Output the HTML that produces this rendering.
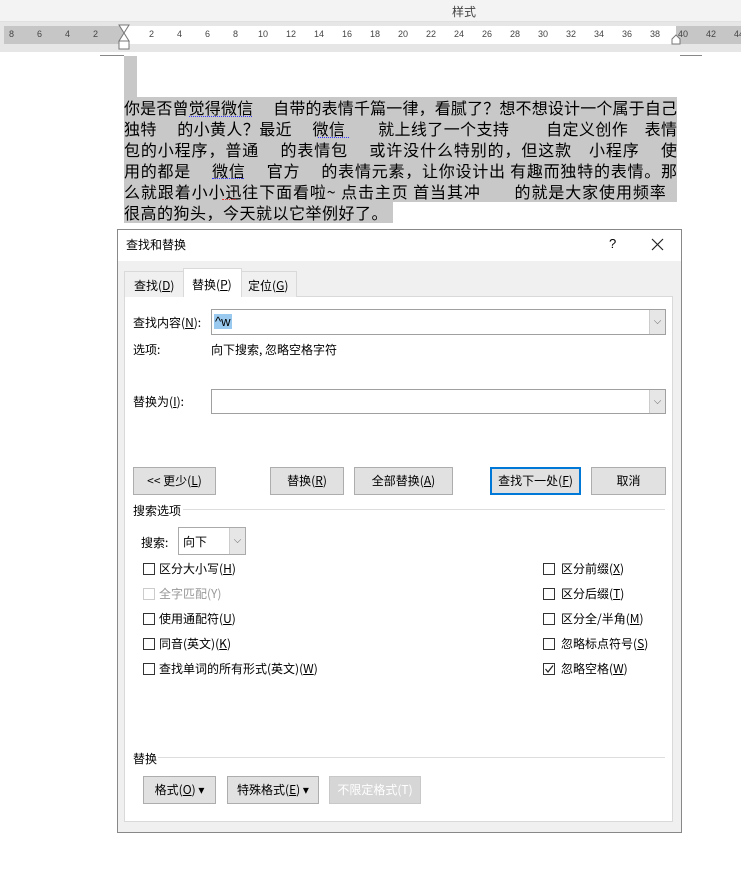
<!DOCTYPE html>
<html><head><meta charset="utf-8"><style>
*{margin:0;padding:0;box-sizing:border-box}
body{width:741px;height:877px;overflow:hidden;background:#fff;font-family:"Liberation Sans","Noto Sans CJK SC",sans-serif;font-size:12px;color:#000;position:relative}
.a{position:absolute}
.t{font-family:"Noto Sans CJK SC","WenQuanYi Zen Hei",sans-serif}
.btn{position:absolute;background:#e1e1e1;border:1px solid #adadad;text-align:center;font-size:12px;line-height:26px}
.cb{position:absolute;width:12px;height:12px;border:1px solid #333;background:#fff}
.lb{position:absolute;font-size:12px;line-height:14px}
.inp{position:absolute;background:#fff;border:1px solid #a0a0a0}
.dd{position:absolute;right:0;top:0;bottom:0;width:16px;background:#e6e6e6;border-left:1px solid #ccc;color:#666;font-size:10px;text-align:center}
.ln{background:#c8c8c8;height:21px;white-space:nowrap;text-align:justify;text-align-last:justify;overflow:hidden}
</style></head><body>
<div class="a" style="left:0;top:0;width:741px;height:22px;background:#f3f3f3;border-bottom:1px solid #e0e0e0"></div>
<div class="a t" style="left:452px;top:3px;font-size:12px;color:#444">样式</div>
<div class="a" style="left:0;top:22px;width:741px;height:30px;background:#e6e6e6"></div>
<div class="a" style="left:4px;top:26px;width:120px;height:18px;background:#c6c6c6"></div>
<div class="a" style="left:124px;top:26px;width:552px;height:18px;background:#fff"></div>
<div class="a" style="left:676px;top:26px;width:65px;height:18px;background:#c6c6c6"></div>
<div class="a" style="left:0;top:29px;width:741px;height:14px;font-size:9px;color:#444">
<span class="a" style="left:9px">8</span><span class="a" style="left:37px">6</span><span class="a" style="left:65px">4</span><span class="a" style="left:93px">2</span>
<span class="a" style="left:149px">2</span><span class="a" style="left:177px">4</span><span class="a" style="left:205px">6</span><span class="a" style="left:233px">8</span><span class="a" style="left:258px">10</span><span class="a" style="left:286px">12</span><span class="a" style="left:314px">14</span><span class="a" style="left:342px">16</span><span class="a" style="left:370px">18</span><span class="a" style="left:398px">20</span><span class="a" style="left:426px">22</span><span class="a" style="left:454px">24</span><span class="a" style="left:482px">26</span><span class="a" style="left:510px">28</span><span class="a" style="left:538px">30</span><span class="a" style="left:566px">32</span><span class="a" style="left:594px">34</span><span class="a" style="left:622px">36</span><span class="a" style="left:650px">38</span><span class="a" style="left:678px">40</span><span class="a" style="left:706px">42</span><span class="a" style="left:734px">44</span></div>
<svg class="a" style="left:117px;top:24px" width="16" height="32"><path d="M2 1H12L7 9Z M7 9L2 17H12Z" fill="#fff" stroke="#777"/><rect x="2" y="17" width="10" height="8" fill="#fff" stroke="#777"/></svg>
<svg class="a" style="left:671px;top:34px" width="12" height="12"><path d="M1 10V5L5 1L9 5V10Z" fill="#fff" stroke="#777"/></svg>
<div class="a" style="left:5px;top:52px;width:736px;height:825px;background:#fff"></div>
<div class="a" style="left:100px;top:55px;width:24px;height:1px;background:#888"></div>
<div class="a" style="left:680px;top:55px;width:22px;height:1px;background:#888"></div>
<div class="a" style="left:124px;top:56px;width:13px;height:42px;background:#c8c8c8"></div>
<div class="a t" style="left:124px;top:97px;width:560px;font-size:16px;line-height:20.6px">
<div class="ln" style="width:553px">你是否曾觉得微信　 自带的表情千篇一律，看腻了？想不想设计一个属于自己</div>
<div class="ln" style="width:553px">独特　 的小黄人？最近　 微信　　就上线了一个支持　　 自定义创作　表情</div>
<div class="ln" style="width:553px">包的小程序，普通　 的表情包　 或许没什么特别的，但这款　小程序　 使</div>
<div class="ln" style="width:553px">用的都是　 微信　 官方　 的表情元素，让你设计出 有趣而独特的表情。那</div>
<div class="ln" style="width:553px;text-align-last:auto;letter-spacing:0.9px">么就跟着小小迅往下面看啦~ 点击主页 首当其冲　　的就是大家使用频率　</div>
<div class="ln" style="width:269px;text-align-last:auto;letter-spacing:0.5px">很高的狗头，今天就以它举例好了。</div>
</div>
<div class="a" style="left:189px;top:116px;width:63px;border-bottom:1px dotted #33f"></div>
<div class="a" style="left:318px;top:137px;width:31px;border-bottom:1px dotted #33f"></div>
<div class="a" style="left:212px;top:178px;width:32px;border-bottom:1px dotted #33f"></div>
<div class="a" style="left:222px;top:199px;width:14px;border-bottom:1px dotted #e33"></div>
<div class="a" style="left:117px;top:229px;width:565px;height:604px;background:#f0f0f0;border:1px solid #888"></div>
<div class="a" style="left:118px;top:230px;width:563px;height:31px;background:#fff"></div>
<div class="a t" style="left:126px;top:236px;font-size:12px">查找和替换</div>
<div class="a" style="left:609px;top:236px;font-size:13px">?</div>
<svg class="a" style="left:651px;top:238px" width="13" height="13"><path d="M1 1L12 12M12 1L1 12" stroke="#222" stroke-width="1.2"/></svg>
<div class="a" style="left:124px;top:296px;width:549px;height:526px;background:#fff;border:1px solid #d9d9d9"></div>
<div class="a" style="left:124px;top:271px;width:60px;height:26px;background:#f0f0f0;border:1px solid #d9d9d9;border-bottom:none"></div>
<div class="a" style="left:183px;top:268px;width:59px;height:29px;background:#fff;border:1px solid #d9d9d9;border-bottom:none"></div>
<div class="a" style="left:241px;top:271px;width:56px;height:26px;background:#f0f0f0;border:1px solid #d9d9d9;border-bottom:none"></div>
<div class="a t" style="left:134px;top:277px">查找(<u>D</u>)</div>
<div class="a t" style="left:192px;top:276px">替换(<u>P</u>)</div>
<div class="a t" style="left:248px;top:277px">定位(<u>G</u>)</div>
<div class="a t" style="left:133px;top:314px">查找内容(<u>N</u>):</div>
<div class="inp" style="left:211px;top:309px;width:455px;height:26px"><span class="a" style="left:2px;top:4px;background:#99c9ef;padding:0 1px;font-size:13px">^w</span><div class="dd" style="line-height:24px">⌵</div></div>
<div class="a t" style="left:133px;top:341px">选项:</div>
<div class="a t" style="left:211px;top:341px">向下搜索, 忽略空格字符</div>
<div class="a t" style="left:133px;top:393px">替换为(<u>I</u>):</div>
<div class="inp" style="left:211px;top:389px;width:455px;height:25px"><div class="dd" style="line-height:23px">⌵</div></div>
<div class="btn t" style="left:133px;top:467px;width:83px;height:28px">&lt;&lt; 更少(<u>L</u>)</div>
<div class="btn t" style="left:270px;top:467px;width:74px;height:28px">替换(<u>R</u>)</div>
<div class="btn t" style="left:354px;top:467px;width:99px;height:28px">全部替换(<u>A</u>)</div>
<div class="btn t" style="left:490px;top:467px;width:91px;height:28px;border:2px solid #0078d7;line-height:24px">查找下一处(<u>F</u>)</div>
<div class="btn t" style="left:591px;top:467px;width:75px;height:28px">取消</div>
<div class="a t" style="left:133px;top:502px">搜索选项</div>
<div class="a" style="left:183px;top:509px;width:482px;height:1px;background:#ddd"></div>
<div class="a t" style="left:141px;top:534px">搜索:</div>
<div class="inp" style="left:178px;top:527px;width:68px;height:28px;border-color:#aaa"><span class="a t" style="left:4px;top:5px">向下</span><div class="dd" style="line-height:26px">⌵</div></div>
<div class="cb" style="left:143px;top:563px"></div><div class="lb t" style="left:159px;top:562px">区分大小写(<u>H</u>)</div>
<div class="cb" style="left:143px;top:588px;border-color:#ccc"></div><div class="lb t" style="left:159px;top:587px;color:#999">全字匹配(Y)</div>
<div class="cb" style="left:143px;top:613px"></div><div class="lb t" style="left:159px;top:612px">使用通配符(<u>U</u>)</div>
<div class="cb" style="left:143px;top:638px"></div><div class="lb t" style="left:159px;top:637px">同音(英文)(<u>K</u>)</div>
<div class="cb" style="left:143px;top:663px"></div><div class="lb t" style="left:159px;top:662px">查找单词的所有形式(英文)(<u>W</u>)</div>
<div class="cb" style="left:543px;top:563px"></div><div class="lb t" style="left:561px;top:562px">区分前缀(<u>X</u>)</div>
<div class="cb" style="left:543px;top:588px"></div><div class="lb t" style="left:561px;top:587px">区分后缀(<u>T</u>)</div>
<div class="cb" style="left:543px;top:613px"></div><div class="lb t" style="left:561px;top:612px">区分全/半角(<u>M</u>)</div>
<div class="cb" style="left:543px;top:638px"></div><div class="lb t" style="left:561px;top:637px">忽略标点符号(<u>S</u>)</div>
<div class="cb" style="left:543px;top:663px"><svg width="10" height="10" style="position:absolute;left:0;top:0"><path d="M1.5 5L4 8L9 1.5" stroke="#222" fill="none" stroke-width="1.2"/></svg></div><div class="lb t" style="left:561px;top:662px">忽略空格(<u>W</u>)</div>
<div class="a t" style="left:133px;top:750px">替换</div>
<div class="a" style="left:158px;top:757px;width:507px;height:1px;background:#ddd"></div>
<div class="btn t" style="left:143px;top:776px;width:73px;height:28px">格式(<u>O</u>) ▾</div>
<div class="btn t" style="left:227px;top:776px;width:92px;height:28px">特殊格式(<u>E</u>) ▾</div>
<div class="btn t" style="left:329px;top:776px;width:92px;height:28px;color:#fff;background:#d6d6d6;border-color:#c8c8c8">不限定格式(T)</div>
</body></html>
